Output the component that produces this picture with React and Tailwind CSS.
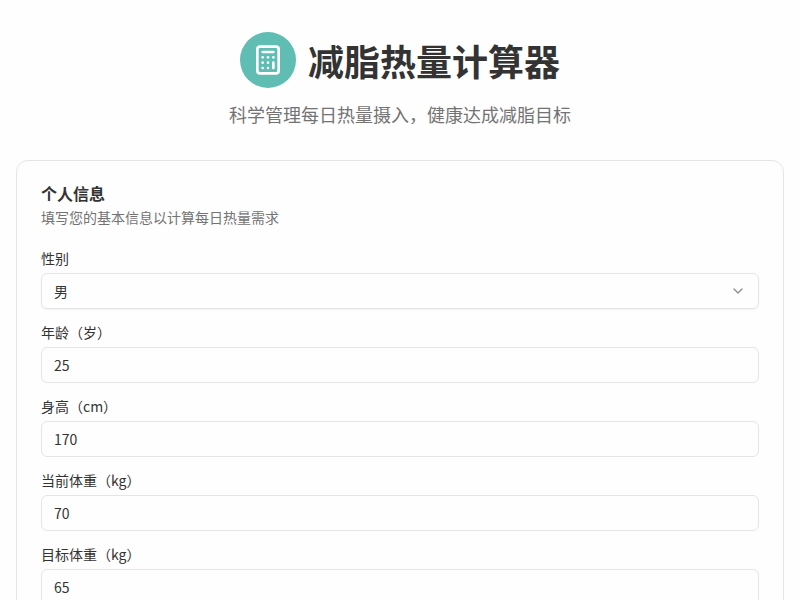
import React, { useState } from "react";
import { Calculator, ChevronDown } from "lucide-react";

const fields = [
    { name: "age", label: "年龄（岁）" },
    { name: "height", label: "身高（cm）" },
    { name: "weight", label: "当前体重（kg）" },
    { name: "target", label: "目标体重（kg）" },
];

export default function App() {
    const [form, setForm] = useState({ age: "25", height: "170", weight: "70", target: "65" });

    const handleInputChange = (e) => {
        const { name, value } = e.target;
        setForm(prev => ({
            ...prev,
            [name]: value
        }));
    };

    return (
        <div lang="zh-CN" className="h-screen overflow-hidden bg-[#fefefe] text-[#333333] antialiased font-['Noto_Sans_CJK_SC',sans-serif]">
            <div className="px-4 py-8">
                <header className="mb-8 text-center">
                    <div className="mb-3 flex items-center justify-center gap-3">
                        <div className="rounded-full bg-[#5fbdb4] p-3">
                            <Calculator className="size-8 text-white" />
                        </div>
                        <h1 className="text-4xl font-bold">减脂热量计算器</h1>
                    </div>
                    <p className="text-lg text-[#737373]">科学管理每日热量摄入，健康达成减脂目标</p>
                </header>

                <section className="flex flex-col gap-6 rounded-xl border border-[#e5e5e5] bg-[#fefefe] p-6">
                    <div className="flex flex-col gap-1.5">
                        <h2 className="text-base leading-none font-bold">个人信息</h2>
                        <p className="text-sm text-[#737373]">填写您的基本信息以计算每日热量需求</p>
                    </div>
                    <div className="flex flex-col gap-4">
                        <div className="flex flex-col gap-2">
                            <span className="text-sm leading-none">性别</span>
                            <button
                                type="button"
                                className="flex h-9 w-full items-center justify-between rounded-md border border-[#e5e5e5] px-3 text-sm shadow-xs"
                            >
                                男
                                <ChevronDown className="size-4 text-[#737373] opacity-80" />
                            </button>
                        </div>
                        {fields.map(field => (
                            <div key={field.name} className="flex flex-col gap-2">
                                <label htmlFor={field.name} className="text-sm leading-none">
                                    {field.label}
                                </label>
                                <input
                                    id={field.name}
                                    name={field.name}
                                    value={form[field.name]}
                                    onChange={handleInputChange}
                                    className="h-9 w-full rounded-md border border-[#e5e5e5] px-3 text-sm"
                                />
                            </div>
                        ))}
                    </div>
                </section>
            </div>
        </div>
    );
}
